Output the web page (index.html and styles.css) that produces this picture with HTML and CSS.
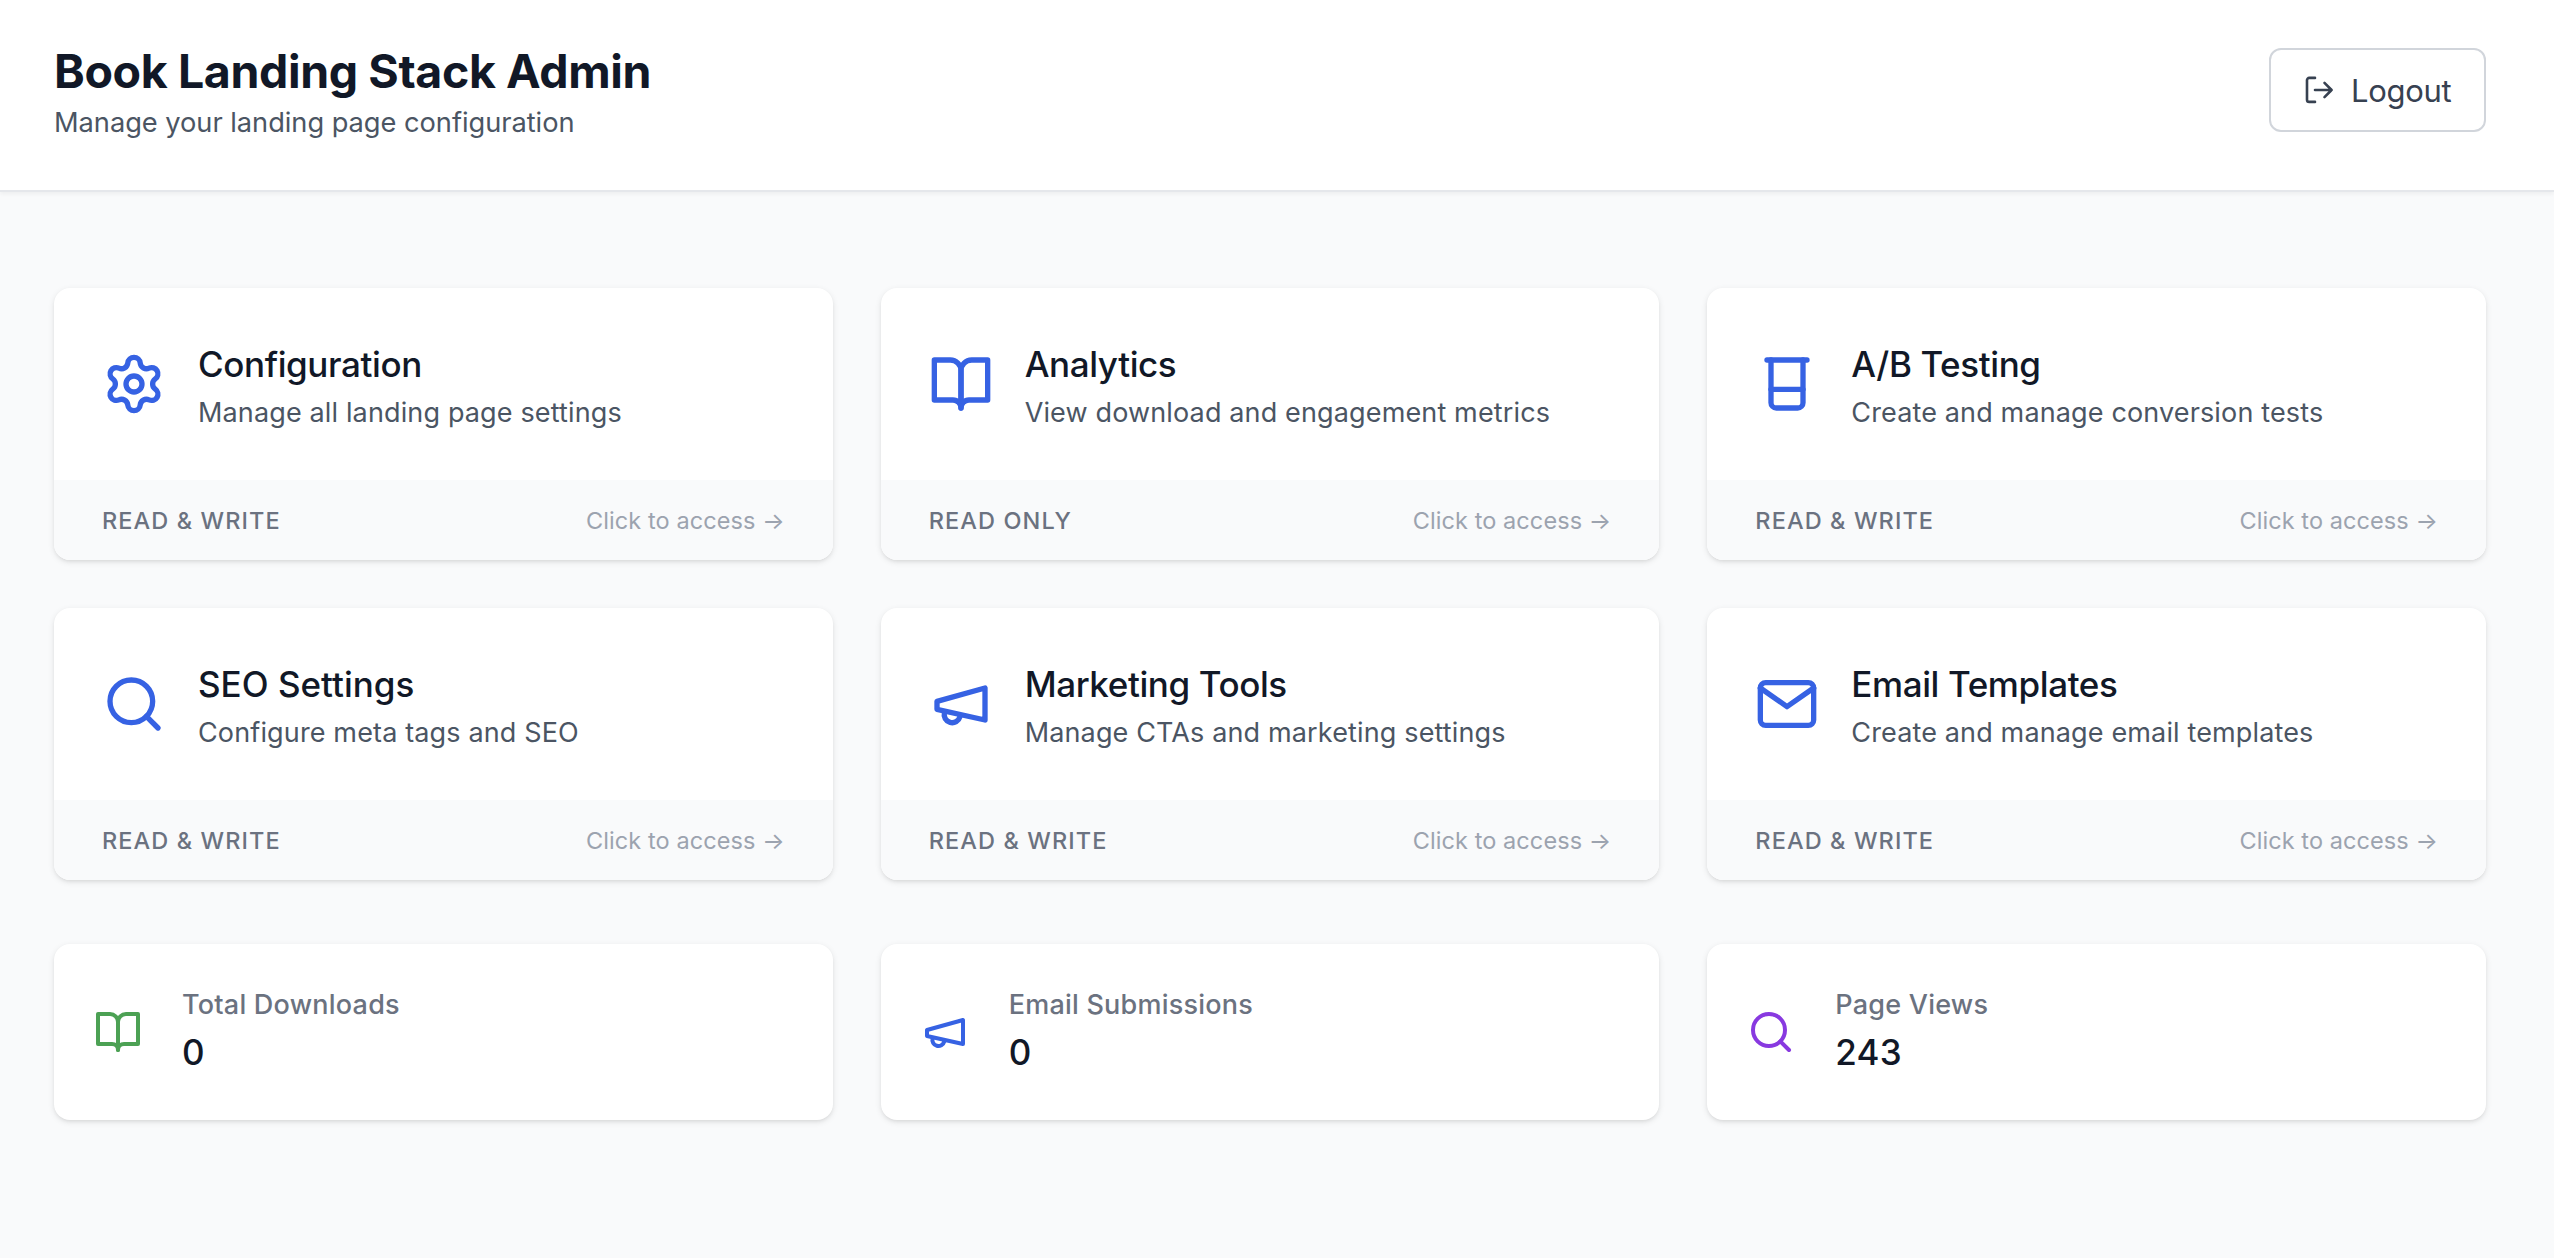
FILE: index.html
```html
<!DOCTYPE html>
<html lang="en">
<head>
<meta charset="utf-8">
<title>Book Landing Stack Admin</title>
<link rel="stylesheet" href="styles.css">
</head>
<body>
<svg class="sprite" aria-hidden="true">
  <symbol id="gear" viewBox="0 0 24 24"><path d="M9.671 4.136a2.34 2.34 0 0 1 4.659 0 2.34 2.34 0 0 0 3.319 1.915 2.34 2.34 0 0 1 2.33 4.033 2.34 2.34 0 0 0 0 3.831 2.34 2.34 0 0 1-2.33 4.033 2.34 2.34 0 0 0-3.319 1.915 2.34 2.34 0 0 1-4.659 0 2.34 2.34 0 0 0-3.32-1.915 2.34 2.34 0 0 1-2.33-4.033 2.34 2.34 0 0 0 0-3.831A2.34 2.34 0 0 1 6.35 6.051a2.34 2.34 0 0 0 3.319-1.915"/><circle cx="12" cy="12" r="3"/></symbol>
  <symbol id="book" viewBox="0 0 24 24"><path d="M2 3h6a4 4 0 0 1 4 4v14a3 3 0 0 0-3-3H2z"/><path d="M22 3h-6a4 4 0 0 0-4 4v14a3 3 0 0 1 3-3h7z"/></symbol>
  <symbol id="beaker" viewBox="0 0 24 24"><path d="M4.5 3h15"/><path d="M6 3v16a2 2 0 0 0 2 2h8a2 2 0 0 0 2-2V3"/><path d="M6 14h12"/></symbol>
  <symbol id="search" viewBox="0 0 24 24"><circle cx="11" cy="11" r="8"/><path d="m21 21-4.35-4.35"/></symbol>
  <symbol id="megaphone" viewBox="0 0 24 24"><path d="m3 11 18-5v12L3 14v-3z"/><path d="M11.6 16.8a3 3 0 1 1-5.8-1.6"/></symbol>
  <symbol id="mail" viewBox="0 0 24 24"><rect x="2" y="4" width="20" height="16" rx="2"/><path d="m22 6-10 7L2 6"/></symbol>
  <symbol id="exit" viewBox="0 0 32 32"><path d="M12 3.9H6.2A2.2 2.2 0 0 0 4 6.1v19.6a2.2 2.2 0 0 0 2.2 2.2H12"/><path d="M12 16h16.6M21.5 8.9l7.1 7.1-7.1 7.1"/></symbol>
</svg>

<header class="header">
  <div>
    <h1 class="header-title">Book Landing Stack Admin</h1>
    <p class="header-subtitle">Manage your landing page configuration</p>
  </div>
  <button class="logout" type="button"><svg class="logout-icon"><use href="#exit"/></svg><span>Logout</span></button>
</header>

<main class="main">
  <section class="grid">
    <a class="card">
      <div class="card-body"><svg class="icon"><use href="#gear"/></svg><div><h2 class="card-title">Configuration</h2><p class="card-text">Manage all landing page settings</p></div></div>
      <div class="card-footer"><span class="access">Read &amp; Write</span><span class="hint">Click to access →</span></div>
    </a>
    <a class="card">
      <div class="card-body"><svg class="icon"><use href="#book"/></svg><div><h2 class="card-title">Analytics</h2><p class="card-text">View download and engagement metrics</p></div></div>
      <div class="card-footer"><span class="access">Read Only</span><span class="hint">Click to access →</span></div>
    </a>
    <a class="card">
      <div class="card-body"><svg class="icon"><use href="#beaker"/></svg><div><h2 class="card-title">A/B Testing</h2><p class="card-text">Create and manage conversion tests</p></div></div>
      <div class="card-footer"><span class="access">Read &amp; Write</span><span class="hint">Click to access →</span></div>
    </a>
    <a class="card">
      <div class="card-body"><svg class="icon"><use href="#search"/></svg><div><h2 class="card-title card-title-loose">SEO Settings</h2><p class="card-text">Configure meta tags and SEO</p></div></div>
      <div class="card-footer"><span class="access">Read &amp; Write</span><span class="hint">Click to access →</span></div>
    </a>
    <a class="card">
      <div class="card-body"><svg class="icon"><use href="#megaphone"/></svg><div><h2 class="card-title">Marketing Tools</h2><p class="card-text">Manage CTAs and marketing settings</p></div></div>
      <div class="card-footer"><span class="access">Read &amp; Write</span><span class="hint">Click to access →</span></div>
    </a>
    <a class="card">
      <div class="card-body"><svg class="icon"><use href="#mail"/></svg><div><h2 class="card-title">Email Templates</h2><p class="card-text">Create and manage email templates</p></div></div>
      <div class="card-footer"><span class="access">Read &amp; Write</span><span class="hint">Click to access →</span></div>
    </a>
  </section>

  <section class="grid stats">
    <div class="card stat"><svg class="icon icon-small icon-green"><use href="#book"/></svg><dl class="stat-data"><dt class="stat-label">Total Downloads</dt><dd class="stat-value">0</dd></dl></div>
    <div class="card stat"><svg class="icon icon-small"><use href="#megaphone"/></svg><dl class="stat-data"><dt class="stat-label">Email Submissions</dt><dd class="stat-value">0</dd></dl></div>
    <div class="card stat"><svg class="icon icon-small icon-purple"><use href="#search"/></svg><dl class="stat-data"><dt class="stat-label">Page Views</dt><dd class="stat-value">243</dd></dl></div>
  </section>
</main>
</body>
</html>
```
FILE: styles.css
```css
*, *::before, *::after { box-sizing: border-box; }

body {
  margin: 0;
  min-height: 100vh;
  background: #f9fafb;
  color: #111827;
  font-family: Inter, "Liberation Sans", sans-serif;
}

h1, h2, p, dl, dd { margin: 0; }

.sprite { display: none; }

.header {
  display: flex;
  align-items: center;
  justify-content: space-between;
  padding: 38px 68px 48px 54px;
  background: #fff;
  border-bottom: 2px solid #e5e7eb;
  box-shadow: 0 2px 4px rgba(0, 0, 0, .05);
}

.header-title {
  padding-top: 2px;
  font-size: 46.5px;
  line-height: 62px;
  font-weight: 700;
  letter-spacing: -.38px;
}

.header-subtitle {
  padding-top: 2px;
  font-size: 27.25px;
  line-height: 38px;
  letter-spacing: -.04px;
  color: #4b5563;
}

.logout {
  display: flex;
  align-items: center;
  gap: 16px;
  width: 217px;
  height: 84px;
  padding: 2px 32px 0;
  border: 2px solid #d1d5db;
  border-radius: 12px;
  background: #fff;
  color: #374151;
  font: 400 31px/48px Inter, "Liberation Sans", sans-serif;
  letter-spacing: -.33px;
}

.logout-icon {
  flex: none;
  width: 32px;
  height: 32px;
  margin-bottom: 2px;
  fill: none;
  stroke: currentColor;
  stroke-width: 2.6;
  stroke-linecap: round;
  stroke-linejoin: round;
}

.main { padding: 96px 68px 96px 54px; }

.grid {
  display: grid;
  grid-template-columns: repeat(3, 1fr);
  gap: 48px;
}

.card {
  overflow: hidden;
  border-radius: 16px;
  background: #fff;
  box-shadow: 0 2px 6px rgba(0, 0, 0, .1), 0 2px 4px -2px rgba(0, 0, 0, .1);
}

.card-body {
  display: flex;
  align-items: center;
  gap: 32px;
  padding: 48px;
}

.icon {
  flex: none;
  width: 64px;
  height: 64px;
  fill: none;
  stroke: #3662e3;
  stroke-width: 2;
  stroke-linecap: round;
  stroke-linejoin: round;
}

.icon-small { width: 48px; height: 48px; }
.icon-green { stroke: #4ca154; }
.icon-purple { stroke: #8839e0; }

.card-title {
  font-size: 35px;
  line-height: 56px;
  font-weight: 500;
  letter-spacing: -.4px;
}

.card-title-loose { letter-spacing: 0; }

.card-text {
  padding-top: 2px;
  font-size: 27px;
  line-height: 38px;
  letter-spacing: .14px;
  color: #4b5563;
}

.card-footer {
  display: flex;
  justify-content: space-between;
  padding: 25px 48px 23px;
  background: #f9fafb;
  font-size: 23.5px;
  line-height: 32px;
}

.access {
  color: #6b7280;
  font-weight: 500;
  letter-spacing: 1.1px;
  text-transform: uppercase;
}

.hint {
  color: #9ca3af;
  letter-spacing: .08px;
}

.stats { margin-top: 64px; }

.stat {
  display: flex;
  align-items: center;
  gap: 40px;
  padding: 40px;
}

.stat-label {
  padding-top: 2px;
  font-size: 27px;
  line-height: 38px;
  font-weight: 500;
  letter-spacing: .23px;
  color: #6b7280;
}

.stat-value {
  font-size: 35px;
  line-height: 56px;
  font-weight: 500;
  letter-spacing: .2px;
}
```
